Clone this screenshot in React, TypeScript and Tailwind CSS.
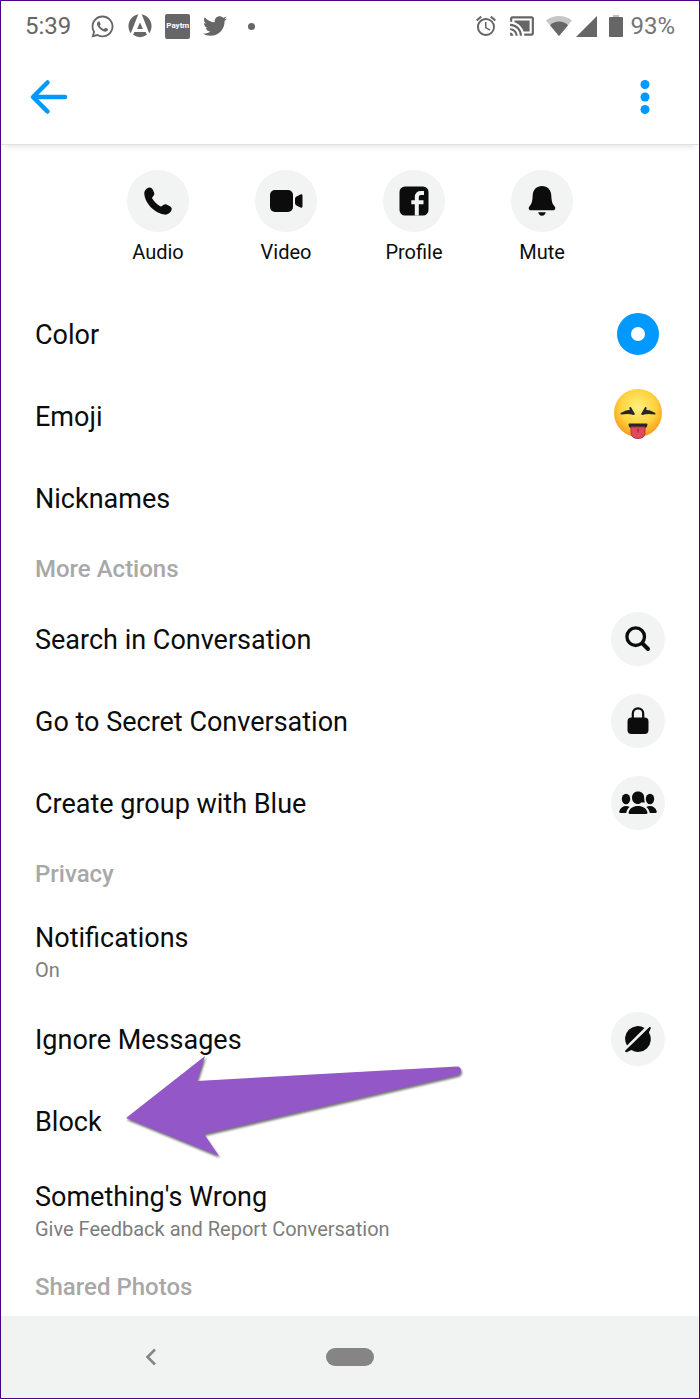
import type { ReactNode } from "react";
import { FaTwitter, FaWhatsapp } from "react-icons/fa";
import { MdAlarm, MdCastConnected } from "react-icons/md";

function AppBadgeIcon() {
  return (
    <svg viewBox="0 0 24 24" className="size-6" fill="currentColor" aria-hidden="true">
      <path d="M10.300 .3A12 12 0 0 0 2.800 19.200Z" />
      <path d="M13.700 .3A12 12 0 0 1 21.200 19.200Z" />
      <path d="M12 8.500 14.900 15H9.100Z" />
      <path d="M6.300 18h11.400l1.200 2.800A12 12 0 0 1 5.100 20.800Z" />
    </svg>
  );
}

function WifiIcon() {
  return (
    <svg viewBox="0 0 26 20" className="h-5 w-[26px]" aria-hidden="true">
      <path d="M0 4.500C3.500 1.500 8 0 13 0s9.500 1.500 13 4.500L13 20Z" fill="#c6c6c6" />
      <path d="M4 9.200C6.500 6.800 9.500 5.500 13 5.500s6.500 1.300 9 3.700L13 20Z" fill="currentColor" />
    </svg>
  );
}

function SignalIcon() {
  return (
    <svg viewBox="0 0 21 21" className="size-[21px]" fill="currentColor" aria-hidden="true">
      <path d="M21 0v21H0Z" />
    </svg>
  );
}

function BatteryIcon() {
  return (
    <svg viewBox="0 0 14 22" className="h-[22px] w-[14px]" aria-hidden="true">
      <path d="M4 0h6v2.500H4Z" fill="#bdbdbd" />
      <rect y="2" width="14" height="20" rx="1" fill="currentColor" />
    </svg>
  );
}

function StatusBar() {
  return (
    <div className="flex h-[50px] items-center justify-between px-6 text-2xl text-[#666]">
      <div className="flex items-center gap-[13px]">
        <span className="mr-1.5 leading-6">5:39</span>
        <FaWhatsapp className="size-[25px]" />
        <AppBadgeIcon />
        <span className="flex size-[25px] items-center justify-center rounded-[2px] bg-[#666] text-[8px] leading-none font-bold text-white">
          Paytm
        </span>
        <FaTwitter className="size-6" />
        <span className="ml-2 size-[7px] rounded-full bg-[#666]" />
      </div>
      <div className="flex items-center">
        <MdAlarm className="size-6" />
        <MdCastConnected className="mx-[11px] size-[26px]" />
        <WifiIcon />
        <span className="mr-3 ml-1">
          <SignalIcon />
        </span>
        <BatteryIcon />
        <span className="ml-[7px] leading-6 text-[#757575]">93%</span>
      </div>
    </div>
  );
}

function TopBar() {
  return (
    <header className="flex h-[94px] items-center justify-between border-b border-[#e0e0e0] pr-[49px] pb-0.5 pl-7 text-[#0099ff] shadow-[0_7px_4px_-4px_#eceeee]">
      <button type="button" aria-label="Back">
        <svg viewBox="0 0 40 36" className="h-9 w-10" fill="none" stroke="currentColor" strokeWidth="4.500" strokeLinecap="round" strokeLinejoin="round">
          <path d="M18.500 3.500 4 18l14.500 14.500M5 18h31" />
        </svg>
      </button>
      <button type="button" aria-label="More options">
        <svg viewBox="0 0 10 36" className="h-9 w-[10px]" fill="currentColor">
          <circle cx="5" cy="5.500" r="4.500" />
          <circle cx="5" cy="18" r="4.500" />
          <circle cx="5" cy="30.500" r="4.500" />
        </svg>
      </button>
    </header>
  );
}

function PhoneIcon() {
  return (
    <svg viewBox="0 0 28 28" className="size-7" aria-hidden="true">
      <path
        d="M1.200 3.200C2.500 1.400 4 .4 5.700.4 7.300.4 8.200 1.300 9 3l1.100 2.700c.5 1.200.2 2-.6 3l-1 1.200c-.5.600-.5 1.100-.1 1.800 2.100 3.100 4.600 5.800 7.800 7.500.7.400 1.200.3 1.800-.2l1.600-1.200c.9-.7 1.700-.8 2.900-.3l3 1.400c1.600.8 2.300 1.800 2.200 3.200-.2 2.800-3.500 5.900-7 5.500C10.900 26.600 1 16.500.3 6.800.2 5.500.4 4.400 1.200 3.200Z"
        fill="currentColor"
      />
    </svg>
  );
}

function VideoIcon() {
  return (
    <svg viewBox="0 0 34 22" className="h-[22px] w-[34px]" fill="currentColor" aria-hidden="true">
      <rect x="1" width="23" height="22" rx="5" />
      <path d="M26 9.500c0-1.800.6-2.600 2-3.300l3.500-1.600c1.300-.6 2 0 2 1.200v10.400c0 1.200-.7 1.800-2 1.200L28 15.800c-1.400-.7-2-1.500-2-3.300Z" />
    </svg>
  );
}

function ProfileIcon() {
  return (
    <svg viewBox="0 0 30 30" className="size-[30px]" aria-hidden="true">
      <rect x=".5" y=".5" width="29" height="29" rx="5.500" fill="currentColor" />
      <path d="M17.800 29.500V11.500c0-3.500 1.700-4.400 4.200-4.400h3M12.300 16.200H24.500" fill="none" stroke="#f2f3f3" strokeWidth="4" />
    </svg>
  );
}

function BellIcon() {
  return (
    <svg viewBox="0 0 28 30" className="h-[30px] w-7" fill="currentColor" aria-hidden="true">
      <path d="M14 0C8.500 0 5 3.800 4.700 9.200 4.400 14.500 4 17.500 1.700 20 .2 21.600.4 24.300 2.800 24.300h22.400c2.400 0 2.600-2.700 1.100-4.300-2.300-2.500-2.700-5.500-3-10.800C23 3.800 19.500 0 14 0Z" />
      <path d="M10.300 26.300h7.400c-.3 2-1.700 3.500-3.700 3.500s-3.400-1.500-3.700-3.500Z" />
    </svg>
  );
}

function SearchIcon() {
  return (
    <svg viewBox="0 0 26 26" className="size-[26px]" fill="none" stroke="currentColor" aria-hidden="true">
      <circle cx="10.700" cy="10.700" r="8.800" strokeWidth="3.300" />
      <path d="m17.500 17.500 5.500 5.500" strokeWidth="4" strokeLinecap="round" />
    </svg>
  );
}

function LockIcon() {
  return (
    <svg viewBox="0 0 22 28" className="h-7 w-[22px]" aria-hidden="true">
      <rect x=".5" y="10.500" width="21" height="16.500" rx="4" fill="currentColor" />
      <path d="M5.800 12V6.500a5.200 5.200 0 0 1 10.400 0V12" fill="none" stroke="currentColor" strokeWidth="2.200" />
    </svg>
  );
}

function GroupIcon() {
  return (
    <svg viewBox="0 0 38 24" className="h-6 w-[38px]" fill="currentColor" aria-hidden="true">
      <ellipse cx="7" cy="8" rx="4.200" ry="5.200" />
      <ellipse cx="31" cy="8" rx="4.200" ry="5.200" />
      <path d="M19 .5c3.800 0 6.200 2.500 6.200 6.200 0 2.200.3 3.500.6 4.800-1.300.2-2.300.1-3.300-.3-1 1.100-2.200 1.800-3.500 1.800-3.500 0-6-2.700-6-6.300S15.300.5 19 .5Z" />
      <path d="M10.800 23c-1 0-1.400-.7-1.200-1.700.8-3.900 4.700-6.300 9.400-6.300s8.600 2.400 9.400 6.300c.2 1-.2 1.700-1.200 1.700Z" />
      <path d="M1.500 22C.4 22 0 21.300.3 20.300c.9-3.300 3.600-5.300 6.700-5.300 1.400 0 2.600.3 3.600 1C8.800 17.500 7.600 19.500 7.200 22ZM36.500 22c1.100 0 1.500-.7 1.200-1.700-.9-3.300-3.600-5.300-6.700-5.300-1.400 0-2.600.3-3.600 1 1.800 1.500 3 3.500 3.400 6Z" />
    </svg>
  );
}

function IgnoreIcon() {
  return (
    <svg viewBox="0 0 28 28" className="size-7" fill="currentColor" aria-hidden="true">
      <path d="M20.500 3A12.700 12.700 0 0 0 3 20.500Z" />
      <path d="M24.900 7.600 26.700 3.600c.5-1.400-.7-2.200-1.700-1.200L1.600 25.300c-1 1-.4 2.100.9 1.900l5-2.100A12.700 12.700 0 0 0 24.900 7.600Z" />
    </svg>
  );
}

function TongueEmoji() {
  return (
    <svg viewBox="0 0 48 54" className="h-[54px] w-12" role="img" aria-label="Squinting face with tongue">
      <defs>
        <radialGradient id="face" cx="50%" cy="38%" r="62%">
          <stop offset="0" stopColor="#fff07f" />
          <stop offset=".6" stopColor="#ffd23e" />
          <stop offset="1" stopColor="#f59a1d" />
        </radialGradient>
      </defs>
      <circle cx="24" cy="24" r="24" fill="url(#face)" />
      <g fill="#26262b" stroke="#26262b" strokeLinejoin="round">
        <path d="M7.500 24.500c3.500-2 6.500-3 9.500-2.800L16.300 19l3.500 6c-3.500-1.200-8-1.200-12.300-.5Z" strokeWidth="2" />
        <path d="M40.500 24.500c-3.500-2-6.500-3-9.500-2.800l.7-2.700-3.500 6c3.500-1.200 8-1.200 12.300-.5Z" strokeWidth="2" />
        <path d="M15.500 35.500h17c0 2.500-2.500 4-8.500 4s-8.500-1.500-8.500-4Z" strokeWidth="2" />
      </g>
      <path d="M17 38h14v5.500c0 4-3 6-7 6s-7-2-7-6Z" fill="#e0485c" stroke="#b92f45" />
      <path d="M24 39.500v4" stroke="#a8283d" strokeWidth="1.500" />
    </svg>
  );
}

function PointerArrow() {
  return (
    <svg
      viewBox="0 0 340 108"
      className="pointer-events-none absolute -top-[26px] left-[123px] h-[108px] w-[340px] drop-shadow-[1px_2px_1px_rgba(0,0,0,0.55)]"
      aria-hidden="true"
    >
      <path d="M2 64 81 2l-8 25 260-14.500c5-.3 5.500 7.500.5 8.500L80 80l15 22Z" fill="#9457c8" />
    </svg>
  );
}

const shortcuts = [
  { label: "Audio", icon: <PhoneIcon /> },
  { label: "Video", icon: <VideoIcon /> },
  { label: "Profile", icon: <ProfileIcon /> },
  { label: "Mute", icon: <BellIcon /> },
];

function Shortcuts() {
  return (
    <div className="flex justify-center pt-[25px] pb-[29px]">
      {shortcuts.map(({ label, icon }) => (
        <button key={label} type="button" className="flex w-32 flex-col items-center gap-2 text-xl leading-6">
          <span className="flex size-[62px] items-center justify-center rounded-full bg-[#f2f3f3]">{icon}</span>
          {label}
        </button>
      ))}
    </div>
  );
}

function Circle({ children }: { children: ReactNode }) {
  return (
    <span className="flex size-[54px] items-center justify-center rounded-full bg-[#f2f3f3]">{children}</span>
  );
}

function Row({ title, children }: { title: string; children?: ReactNode }) {
  return (
    <button type="button" className="flex h-[82px] w-full items-center justify-between px-[34px] text-left">
      <span className="pt-0.5 text-[27px] leading-8">{title}</span>
      {children && <span className="flex w-[54px] justify-center">{children}</span>}
    </button>
  );
}

function DetailRow({ title, detail }: { title: string; detail: string }) {
  return (
    <button type="button" className="flex h-[95px] w-full flex-col px-[34px] pt-[19px] text-left">
      <span className="text-[27px] leading-8">{title}</span>
      <span className="text-xl leading-8 text-[#7d7d7d]">{detail}</span>
    </button>
  );
}

function SectionTitle({ children }: { children: ReactNode }) {
  return (
    <h2 className="flex h-[59px] items-center px-[34px] text-2xl font-medium text-[#a8a8a8]">{children}</h2>
  );
}

function NavBar() {
  return (
    <nav className="grid h-[82px] grid-cols-7 items-center bg-[#f1f2f2] text-[#858585]">
      <button type="button" aria-label="Back" className="col-start-2 flex justify-center">
        <svg viewBox="0 0 12 18" className="h-[18px] w-3" fill="none" stroke="currentColor" strokeWidth="2.500">
          <path d="M10 1.500 2.500 9l7.500 7.500" />
        </svg>
      </button>
      <button type="button" aria-label="Home" className="col-start-4 h-[18px] w-12 justify-self-center rounded-full bg-[#858585]" />
    </nav>
  );
}

export default function App() {
  return (
    <div className="border border-[#4b0082] bg-white font-[Roboto,sans-serif] text-[#0c0c0c]">
      <StatusBar />
      <TopBar />
      <main>
        <Shortcuts />
        <Row title="Color">
          <span className="size-[42px] rounded-full border-14 border-[#0099ff]" />
        </Row>
        <Row title="Emoji">
          <TongueEmoji />
        </Row>
        <Row title="Nicknames" />

        <SectionTitle>More Actions</SectionTitle>
        <Row title="Search in Conversation">
          <Circle>
            <SearchIcon />
          </Circle>
        </Row>
        <Row title="Go to Secret Conversation">
          <Circle>
            <LockIcon />
          </Circle>
        </Row>
        <Row title="Create group with Blue">
          <Circle>
            <GroupIcon />
          </Circle>
        </Row>

        <SectionTitle>Privacy</SectionTitle>
        <DetailRow title="Notifications" detail="On" />
        <Row title="Ignore Messages">
          <Circle>
            <IgnoreIcon />
          </Circle>
        </Row>
        <div className="relative">
          <Row title="Block" />
          <PointerArrow />
        </div>
        <DetailRow title="Something's Wrong" detail="Give Feedback and Report Conversation" />

        <SectionTitle>Shared Photos</SectionTitle>
      </main>
      <NavBar />
    </div>
  );
}
